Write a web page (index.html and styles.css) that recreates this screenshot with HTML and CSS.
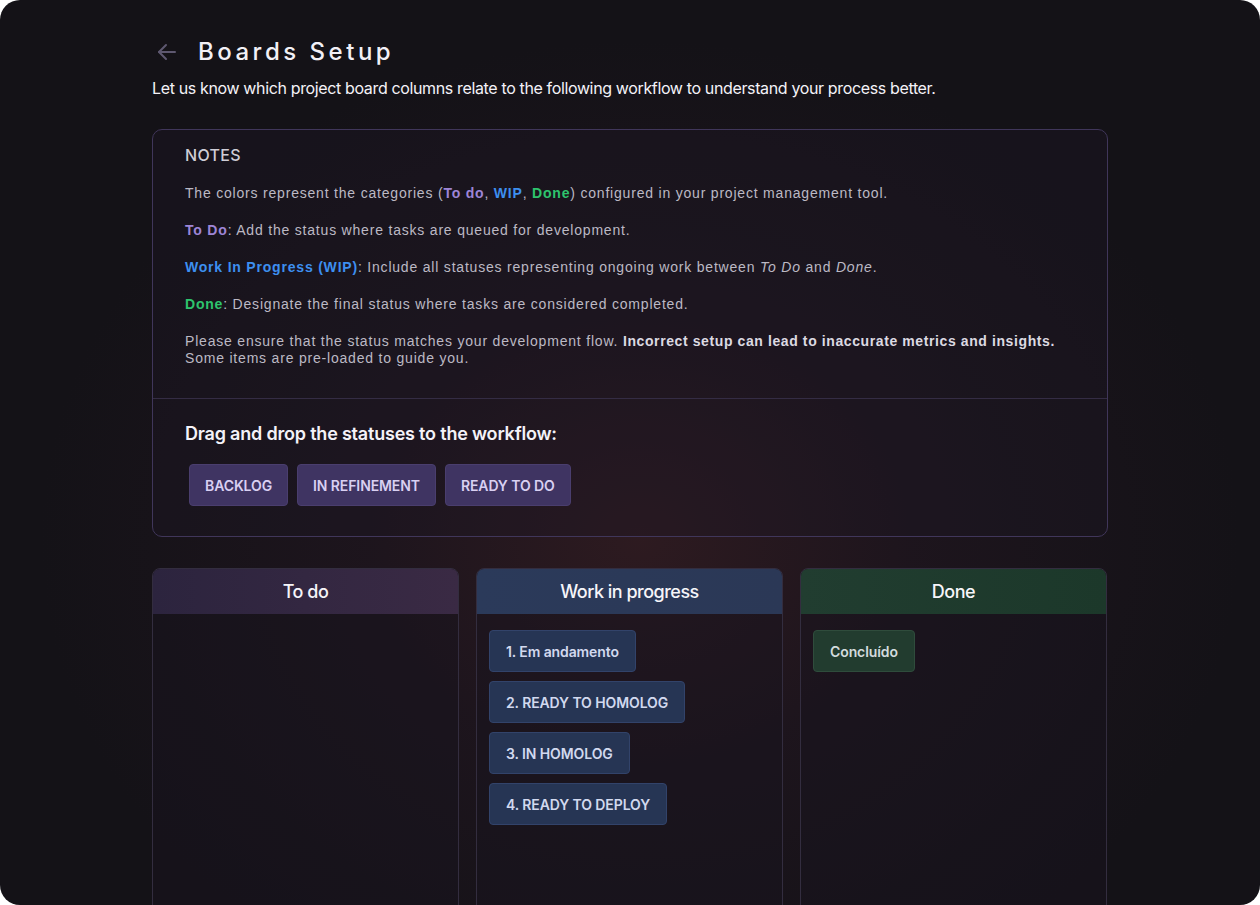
FILE: index.html
```html
<!DOCTYPE html>
<html lang="en">
<head>
<meta charset="utf-8">
<title>Boards Setup</title>
<link rel="stylesheet" href="styles.css">
</head>
<body>
<div class="app">
  <div class="page">
    <header class="header">
      <svg class="back" width="24" height="24" viewBox="0 0 24 24" fill="none" stroke="currentColor" stroke-width="2" stroke-linecap="round" stroke-linejoin="round"><path d="M20 12H4"/><path d="M11 5l-7 7 7 7"/></svg>
      <h1 class="title">Boards Setup</h1>
    </header>
    <p class="subtitle">Let us know which project board columns relate to the following workflow to understand your process better.</p>

    <section class="card">
      <div class="notes">
        <h2 class="notes-title">NOTES</h2>
        <p>The colors represent the categories (<b class="c-todo">To do</b>, <b class="c-wip">WIP</b>, <b class="c-done">Done</b>) configured in your project management tool.</p>
        <p><b class="c-todo">To Do</b>: Add the status where tasks are queued for development.</p>
        <p><b class="c-wip">Work In Progress (WIP)</b>: Include all statuses representing ongoing work between <i>To Do</i> and <i>Done</i>.</p>
        <p><b class="c-done">Done</b>: Designate the final status where tasks are considered completed.</p>
        <p>Please ensure that the status matches your development flow. <b class="strong">Incorrect setup can lead to inaccurate metrics and insights.</b><br>Some items are pre-loaded to guide you.</p>
      </div>
      <div class="drag">
        <h3 class="drag-title">Drag and drop the statuses to the workflow:</h3>
        <div class="chips">
          <span class="chip">BACKLOG</span>
          <span class="chip">IN REFINEMENT</span>
          <span class="chip">READY TO DO</span>
        </div>
      </div>
    </section>

    <section class="columns">
      <div class="column col-todo">
        <div class="col-head">To do</div>
        <div class="col-body"></div>
      </div>
      <div class="column col-wip">
        <div class="col-head">Work in progress</div>
        <div class="col-body">
          <span class="item">1. Em andamento</span>
          <span class="item">2. READY TO HOMOLOG</span>
          <span class="item">3. IN HOMOLOG</span>
          <span class="item">4. READY TO DEPLOY</span>
        </div>
      </div>
      <div class="column col-done">
        <div class="col-head">Done</div>
        <div class="col-body">
          <span class="item">Concluído</span>
        </div>
      </div>
    </section>
  </div>
</div>
</body>
</html>
```

FILE: styles.css
```css
* { box-sizing: border-box; }
html, body { margin: 0; padding: 0; background: #ffffff; }
body { width: 1260px; height: 905px; overflow: hidden; }

.app {
  width: 1260px;
  height: 905px;
  border-radius: 20px;
  overflow: hidden;
  background:
    radial-gradient(ellipse 600px 500px at 640px 540px, rgba(56, 30, 36, 0.7) 0%, rgba(40, 24, 36, 0.45) 45%, rgba(20, 18, 23, 0) 100%),
    #141217;
  font-family: "Liberation Sans", Arial, sans-serif;
  color: #e8e6ee;
}

.page {
  width: 956px;
  margin: 0 auto;
  padding-top: 36px;
}

.header {
  display: flex;
  align-items: center;
  gap: 19px;
  height: 32px;
  padding-left: 3px;
}
.back { color: #5e5870; flex: none; }
.title {
  margin: 0;
  font-family: Inter, "Liberation Sans", sans-serif;
  font-size: 24px;
  font-weight: 500;
  letter-spacing: 3.5px;
  color: #f2f0f6;
  line-height: 32px;
}
.subtitle {
  margin: 10px 0 0;
  font-family: Inter, "Liberation Sans", sans-serif;
  font-size: 16px;
  line-height: 20px;
  letter-spacing: -0.36px;
  color: #f4f2f8;
}

.card {
  margin-top: 31px;
  border: 1px solid #40365a;
  border-radius: 10px;
  background: rgba(30, 24, 36, 0.35);
}
.notes {
  padding: 15px 32px 31px;
  border-bottom: 1px solid #342c44;
}
.notes-title {
  margin: 0 0 20px;
  font-family: Inter, "Liberation Sans", sans-serif;
  font-size: 16px;
  font-weight: 500;
  letter-spacing: 0.3px;
  color: #cfcdd6;
  line-height: 20px;
}
.notes p {
  margin: 0 0 20px;
  font-size: 14px;
  line-height: 17px;
  letter-spacing: 0.8px;
  color: #bcb9c4;
}
.notes p:last-child { margin-bottom: 0; }
.notes b { font-weight: 700; }
.notes i { font-style: italic; }
.c-todo { color: #9d85d6; }
.c-wip { color: #3d8ff0; }
.c-done { color: #2ec46d; }
.strong { color: #dcdae2; letter-spacing: 0.6px; }

.drag { padding: 24px 32px 30px; }
.drag-title {
  margin: 0 0 19px;
  font-family: Inter, "Liberation Sans", sans-serif;
  font-size: 18px;
  font-weight: 600;
  letter-spacing: -0.2px;
  line-height: 22px;
  color: #f4f2f8;
}
.chips { display: flex; gap: 9px; padding-left: 4px; }
.chip {
  display: inline-flex;
  align-items: center;
  height: 42px;
  padding: 0 15px;
  border-radius: 4px;
  background: #3f3462;
  border: 1px solid #4a3e6e;
  font-family: Inter, "Liberation Sans", sans-serif;
  font-size: 14px;
  font-weight: 600;
  letter-spacing: -0.1px;
  color: #d9d0f2;
}

.columns {
  margin-top: 31px;
  display: grid;
  grid-template-columns: repeat(3, 307px);
  gap: 17px;
}
.column {
  height: 360px;
  border: 1px solid #332d3f;
  border-radius: 8px 8px 0 0;
  background: rgba(24, 20, 30, 0.45);
  display: flex;
  flex-direction: column;
}
.col-head {
  height: 45px;
  display: flex;
  align-items: center;
  justify-content: center;
  border-radius: 7px 7px 0 0;
  font-family: Inter, "Liberation Sans", sans-serif;
  font-size: 18px;
  font-weight: 500;
  letter-spacing: -0.5px;
  color: #f6f5f9;
}
.col-todo .col-head { background: linear-gradient(90deg, #2c243e 0%, #3a2a44 100%); }
.col-wip .col-head { background: linear-gradient(90deg, #2b3a5a 0%, #2b3856 100%); }
.col-done .col-head { background: linear-gradient(90deg, #213d30 0%, #1c382a 100%); }

.col-body {
  flex: 1;
  padding: 16px 12px;
  display: flex;
  flex-direction: column;
  align-items: flex-start;
  gap: 9px;
}
.item {
  display: inline-flex;
  align-items: center;
  height: 42px;
  padding: 0 16px;
  border-radius: 4px;
  font-family: Inter, "Liberation Sans", sans-serif;
  font-size: 14px;
  font-weight: 600;
  letter-spacing: -0.1px;
}
.col-wip .item { background: #263554; border: 1px solid #32436a; color: #d2d9ef; }
.col-done .item { background: #223c2f; border: 1px solid #2f4c3c; color: #d3dbdd; }
```
